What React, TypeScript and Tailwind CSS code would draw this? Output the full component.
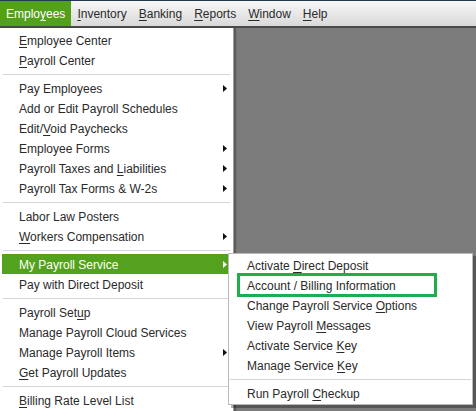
type Entry = { label: string; arrow?: boolean; active?: boolean } | "sep";

// "_" marks the accelerator letter
function Label({ text }: { text: string }) {
  const i = text.indexOf("_");
  if (i < 0) return <>{text}</>;
  return (
    <>
      {text.slice(0, i)}
      <span className="underline decoration-1 underline-offset-2">{text[i + 1]}</span>
      {text.slice(i + 2)}
    </>
  );
}

function Arrow({ white }: { white?: boolean }) {
  return (
    <svg width="4" height="7" viewBox="0 0 4 7" className="shrink-0">
      <polygon points="0,0 4,3.5 0,7" fill={white ? "#fff" : "#111"} />
    </svg>
  );
}

const menuBar = ["Emplo_yees", "_Inventory", "_Banking", "_Reports", "_Window", "_Help"];

const employeeMenu: Entry[] = [
  { label: "_Employee Center" },
  { label: "_Payroll Center" },
  "sep",
  { label: "Pay Employees", arrow: true },
  { label: "Add or Edit Payroll Schedules" },
  { label: "Edit/_Void Paychecks" },
  { label: "Employee Forms", arrow: true },
  { label: "Payroll Taxes and _Liabilities", arrow: true },
  { label: "Payroll Tax Forms & W-2s", arrow: true },
  "sep",
  { label: "Labor Law Posters" },
  { label: "_Workers Compensation", arrow: true },
  "sep",
  { label: "My Payroll Service", arrow: true, active: true },
  { label: "Pay with Direct Deposit" },
  "sep",
  { label: "Payroll Set_up" },
  { label: "Manage Payroll Cloud Services" },
  { label: "Manage Payroll Items", arrow: true },
  { label: "_Get Payroll Updates" },
  "sep",
  { label: "_Billing Rate Level List" },
];

const serviceMenu: Entry[] = [
  { label: "Activate _Direct Deposit" },
  { label: "Account / Billing Information" },
  { label: "Change Payroll Service _Options" },
  { label: "View Payroll _Messages" },
  { label: "Activate Service _Key" },
  { label: "Manage Service _Key" },
  "sep",
  { label: "Run Payroll _Checkup" },
];

function MenuRows({ entries, indent }: { entries: Entry[]; indent: string }) {
  return (
    <>
      {entries.map((e, i) =>
        e === "sep" ? (
          <div key={i} className="h-[8px] px-[1px] pt-[4px]">
            <div className="h-px bg-[#d5d5d5]" />
          </div>
        ) : (
          <div
            key={i}
            className={`flex h-[20px] items-center justify-between pr-[4px] pt-[1px] ${indent} ${
              e.active ? "bg-[#54a11d] text-white" : ""
            }`}
          >
            <span className="whitespace-nowrap">
              <Label text={e.label} />
            </span>
            {e.arrow && <Arrow white={e.active} />}
          </div>
        )
      )}
    </>
  );
}

export default function App() {
  return (
    <div className="relative h-[411px] w-[476px] overflow-hidden bg-[#7b7b7b] font-['Liberation_Sans',Arial,sans-serif] text-[12px] text-[#2a2a2a]">
      <div className="flex h-[28px] border-t border-b-2 border-t-[#23384d] border-b-[#4a4a4a] bg-gradient-to-b from-[#f7f7f7] to-[#d9d9d9]">
        {menuBar.map((m, i) => (
          <div
            key={m}
            className={`flex h-full items-center px-[6px] ${i === 0 ? "bg-[#52a01c] text-white" : ""}`}
          >
            <Label text={m} />
          </div>
        ))}
      </div>

      <div className="flex h-[383px]">
        <div className="w-[234px] border-r border-[#9c9c9c] bg-white px-[2px] pt-[2px] shadow-[2px_0_1px_rgba(0,0,0,0.25)]">
          <MenuRows entries={employeeMenu} indent="pl-[17px]" />
        </div>
      </div>

      <div className="absolute left-[228px] top-[253px] w-[245px] border border-[#b9b9b9] bg-white py-[1px] shadow-[3px_3px_0_rgba(0,0,0,0.3)]">
        <MenuRows entries={serviceMenu} indent="pl-[18px]" />
      </div>

      <div className="absolute left-[237px] top-[273px] h-[24px] w-[200px] border-[3px] border-[#21ad4c]" />
    </div>
  );
}
